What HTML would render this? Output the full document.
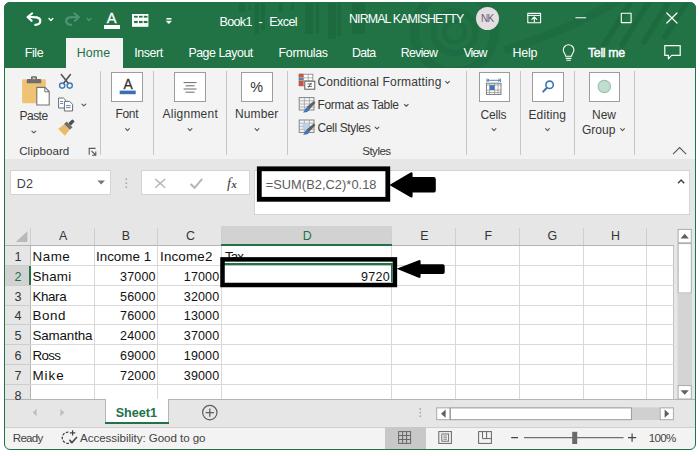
<!DOCTYPE html>
<html>
<head>
<meta charset="utf-8">
<title>Book1 - Excel</title>
<style>
html,body{margin:0;padding:0;}
body{width:700px;height:456px;background:#fff;overflow:hidden;position:relative;font-family:"Liberation Sans",sans-serif;}
.a{position:absolute;}
.t{position:absolute;white-space:nowrap;line-height:1;}
#win{position:absolute;left:4px;top:2px;width:692px;height:448px;border-radius:6px;background:#e6e6e6;overflow:hidden;}
#in{position:absolute;left:-4px;top:-2px;width:700px;height:456px;}
#frame{position:absolute;left:4px;top:2px;width:692px;height:448px;border-radius:6px;box-sizing:border-box;border:1px solid #217346;pointer-events:none;}
svg{position:absolute;overflow:visible;}
.ibox{position:absolute;background:#fff;border:1px solid #9c9c9c;box-sizing:border-box;}
.sep{position:absolute;width:1px;background:#c6c6c6;top:71px;height:84px;}
.wb{position:absolute;background:#fff;border:1px solid #d4d4d4;box-sizing:border-box;}
.vl{position:absolute;width:1px;background:#d9d9d9;}
.hl{position:absolute;height:1px;background:#d9d9d9;}
</style>
</head>
<body>
<div id="win"><div id="in">

<div class="a" style="left:0;top:0;width:700px;height:68px;background:#217346;"></div>
<svg style="left:0;top:0" width="700" height="68" viewBox="0 0 700 68">
 <defs><clipPath id="tc"><rect x="0" y="0" width="700" height="68"/></clipPath></defs>
 <g clip-path="url(#tc)" fill="none" stroke="#1d6a3f">
  <g stroke="none" fill="#1d6a3f"><rect x="239" y="2" width="6.0" height="10"/><rect x="248.6" y="2" width="2.0" height="8"/><rect x="254.6" y="2" width="4.4" height="32"/><rect x="260.6" y="2" width="4.4" height="28"/><rect x="279" y="2" width="4.0" height="10"/><rect x="291" y="2" width="3.0" height="8"/><rect x="305" y="2" width="8.0" height="32"/><rect x="316" y="2" width="3.0" height="31"/><rect x="328" y="2" width="8.0" height="37"/><rect x="337.5" y="2" width="3.5" height="34"/><rect x="352" y="2" width="13.0" height="32"/></g>
  <g stroke="#1e6c41"><circle cx="454.5" cy="32" r="10.5" stroke-width="4"/>
  <circle cx="454.5" cy="32" r="21" stroke-width="6"/>
  <circle cx="454.5" cy="32" r="40" stroke-width="9"/>
  </g>
  <g stroke-width="5.5" stroke-linecap="round">
   <line x1="632" y1="0" x2="604" y2="45"/><line x1="650" y1="0" x2="622" y2="45"/><line x1="670" y1="0" x2="644" y2="42"/><line x1="688" y1="0" x2="665" y2="37"/>
  </g>
  <path d="M505 50 Q570 30 618 0" stroke="#1e6c41" stroke-width="8" fill="none"/>


 </g>
</svg>
<!-- Home tab -->
<div class="a" style="left:65.5px;top:38px;width:57px;height:31px;background:#f3f3f3;"></div>
<!-- QAT icons -->
<svg style="left:0;top:0" width="700" height="68" viewBox="0 0 700 68" fill="none" stroke="#fff" stroke-linecap="round" stroke-linejoin="round">
 <!-- undo -->
 <path d="M32 13.5 L27.6 17 L31.6 20.8 M28.2 17 C33 17 40.3 16.4 40.3 20.8 C40.3 23.6 38 24.8 35.2 24.8" stroke-width="2.2"/>
 <path d="M49 18.6 L50.9 20.5 L52.8 18.6" stroke-width="1.4"/>
 <!-- redo (dim) -->
 <g stroke="#4f9470">
 <path d="M74.5 13.5 L78.9 17 L74.9 20.8 M78.3 17 C73.5 17 66.2 16.4 66.2 20.8 C66.2 23.6 68.5 24.8 71.3 24.8" stroke-width="2.2"/>
 <path d="M87.2 18.6 L89.1 20.5 L91 18.6" stroke-width="1.4"/>
 </g>
 <!-- customize -->
 <path d="M166.4 18.7 H171.4" stroke-width="1.4" stroke-linecap="butt"/>
 <path d="M166.3 20.9 H171.5 L168.9 23.8 Z" fill="#fff" stroke-width="0.4"/>
 <!-- ribbon display options -->
 <rect x="527.8" y="13.4" width="12.8" height="9.4" stroke-width="1.1"/>
 <path d="M527.8 15.4 H540.6" stroke-width="1"/>
 <path d="M534.3 22 V17 M531.9 19.3 L534.3 16.9 L536.7 19.3" stroke-width="1.1"/>
 <!-- minimize -->
 <path d="M575.8 17.7 H585.8" stroke-width="1.1"/>
 <!-- maximize -->
 <rect x="621.3" y="13.2" width="9.8" height="9.4" stroke-width="1.1"/>
 <!-- close -->
 <path d="M666.8 13 L677 23 M677 13 L666.8 23" stroke-width="1.2"/>
 <!-- bulb -->
 <path d="M565.6 56.2 C565.6 53.5 563.3 53 563.3 50 A5.3 5.3 0 0 1 573.9 50 C573.9 53 571.6 53.5 571.6 56.2 Z M566.2 58.4 H571 M566.8 60.3 H570.4" stroke-width="1.1"/>
 <!-- comment -->
 <path d="M664.8 45.6 H680.2 V55.4 H671.6 L668.4 58.8 V55.4 H664.8 Z" stroke-width="1.2"/>
</svg>
<!-- font colour A -->
<div class="a" style="left:103.5px;top:24.5px;width:16.4px;height:4px;background:#fff;"></div>
<!-- table icon -->
<svg style="left:132px;top:13.8px" width="16.4" height="12.8" viewBox="0 0 16.4 12.8">
 <rect x="0" y="0" width="16.4" height="12.8" fill="#fff"/>
 <g fill="#217346"><rect x="2.1" y="1.8" width="3.6" height="1.8"/><rect x="7" y="1.8" width="3.6" height="1.8"/><rect x="11.8" y="1.8" width="3.7" height="1.8"/>
 <rect x="2.1" y="6.9" width="3.6" height="2.2"/><rect x="7" y="6.9" width="3.6" height="2.2"/><rect x="11.8" y="6.9" width="3.7" height="2.2"/></g>
</svg>
<!-- NK avatar -->
<div class="a" style="left:476.3px;top:6.6px;width:23px;height:23px;border-radius:50%;background:#e3dfe0;"></div>


<div class="a" style="left:0;top:68px;width:700px;height:91px;background:#f3f3f3;"></div>
<div class="sep" style="left:100.0px"></div><div class="sep" style="left:153.3px"></div><div class="sep" style="left:225.8px"></div><div class="sep" style="left:286.8px"></div><div class="sep" style="left:466.3px"></div><div class="sep" style="left:519.9px"></div><div class="sep" style="left:573.5px"></div><div class="sep" style="left:634.1px"></div><div class="ibox" style="left:111.2px;top:72px;width:31.999999999999986px;height:30px;"></div><div class="ibox" style="left:174.2px;top:72px;width:31.400000000000006px;height:30px;"></div><div class="ibox" style="left:241.2px;top:72px;width:31.400000000000034px;height:30px;"></div><div class="ibox" style="left:478.6px;top:72px;width:31.19999999999999px;height:30px;"></div><div class="ibox" style="left:532px;top:72px;width:31.600000000000023px;height:30px;"></div><div class="ibox" style="left:588.6px;top:72px;width:31.399999999999977px;height:30px;"></div><svg style="left:0;top:0" width="700" height="170" viewBox="0 0 700 170"><path d="M31.9 131.05 L33.8 132.95 L35.699999999999996 131.05" fill="none" stroke="#555" stroke-width="1.1" stroke-linecap="round" stroke-linejoin="round"/><path d="M81.89999999999999 104.05 L83.8 105.95 L85.7 104.05" fill="none" stroke="#555" stroke-width="1.1" stroke-linecap="round" stroke-linejoin="round"/><path d="M125.6 128.65 L127.5 130.54999999999998 L129.4 128.65" fill="none" stroke="#555" stroke-width="1.1" stroke-linecap="round" stroke-linejoin="round"/><path d="M188.1 128.65 L190 130.54999999999998 L191.9 128.65" fill="none" stroke="#555" stroke-width="1.1" stroke-linecap="round" stroke-linejoin="round"/><path d="M255.1 128.65 L257 130.54999999999998 L258.9 128.65" fill="none" stroke="#555" stroke-width="1.1" stroke-linecap="round" stroke-linejoin="round"/><path d="M445.6 81.45 L447.5 83.35000000000001 L449.4 81.45" fill="none" stroke="#555" stroke-width="1.1" stroke-linecap="round" stroke-linejoin="round"/><path d="M404.40000000000003 104.35 L406.3 106.25 L408.2 104.35" fill="none" stroke="#555" stroke-width="1.1" stroke-linecap="round" stroke-linejoin="round"/><path d="M375.1 127.05 L377 128.95 L378.9 127.05" fill="none" stroke="#555" stroke-width="1.1" stroke-linecap="round" stroke-linejoin="round"/><path d="M492.1 128.65 L494 130.54999999999998 L495.9 128.65" fill="none" stroke="#555" stroke-width="1.1" stroke-linecap="round" stroke-linejoin="round"/><path d="M545.6 128.65 L547.5 130.54999999999998 L549.4 128.65" fill="none" stroke="#555" stroke-width="1.1" stroke-linecap="round" stroke-linejoin="round"/><path d="M620.6 128.65 L622.5 130.54999999999998 L624.4 128.65" fill="none" stroke="#555" stroke-width="1.1" stroke-linecap="round" stroke-linejoin="round"/>
 <rect x="22.1" y="79.2" width="23.7" height="24" rx="1.2" fill="#f0c374"/>
 <path d="M26.8 83.2 V80.2 Q26.8 79 28 79 H31 V77.4 Q31 76.2 32.2 76.2 H35.8 Q37 76.2 37 77.4 V79 H40 Q41.2 79 41.2 80.2 V83.2 Z" fill="#6e6e6e"/>
 <rect x="32.6" y="77.6" width="2.8" height="1.6" fill="#e9c78a"/>
 <path d="M36.8 87.4 H45 L49.2 91.6 V105 H36.8 Z" fill="#fff" stroke="#737373" stroke-width="1.1"/>
 <path d="M44.8 87.6 V91.8 H49" fill="none" stroke="#737373" stroke-width="1"/>

 <g fill="none" stroke-linecap="round">
 <path d="M61.3 74.6 L68.4 83.6 M70.4 74.6 L63.4 83.6" stroke="#555" stroke-width="1.6"/>
 <circle cx="62.2" cy="85.6" r="2.6" stroke="#3f7ab8" stroke-width="1.4"/>
 <circle cx="69.7" cy="85.6" r="2.6" stroke="#3f7ab8" stroke-width="1.4"/>
 </g>

 <g fill="#fff" stroke="#6b6b6b" stroke-width="1">
 <path d="M58.6 98 H63.4 L66 100.6 V108 H58.6 Z"/>
 <path d="M64.4 101.4 H69.6 L72.6 104.4 V111 H64.4 Z"/>
 </g>
 <path d="M60.2 101.5 H63 M60.2 103.5 H63 M66 105.6 H70.6 M66 107.6 H70.6" stroke="#4a7ab5" stroke-width="0.9"/>

 <g transform="translate(68.2,125.7) rotate(-45)">
  <path d="M-9.4 -4.8 L-1.8 -3.9 V3.9 L-9.4 4.8 Z" fill="#ecbb6a"/>
  <rect x="-1.8" y="-4.1" width="3.8" height="8.2" fill="#6e6e6e"/>
  <rect x="2" y="-1.7" width="5.6" height="3.4" rx="0.8" fill="#505050"/>
 </g>

 <path d="M89.2 154.8 V148.4 H95.6" fill="none" stroke="#5a5a5a" stroke-width="1.1"/>
 <path d="M91.4 150.8 L95.6 155 M95.8 151.4 V155.2 H92" fill="none" stroke="#5a5a5a" stroke-width="1.1"/>

 <rect x="119.7" y="90.6" width="16" height="3.6" fill="#3c6fb0"/>

 <path d="M183.6 82.6 H196.6 M185.6 85.8 H194.6 M183.6 89 H196.6 M185.6 92.2 H194.6" stroke="#6a6a6a" stroke-width="1"/>

 <rect x="299.2" y="74.2" width="13.6" height="11.6" fill="#fff" stroke="#8a8a8a" stroke-width="0.9"/>
 <path d="M303.6 74.2 V85.8 M308.2 74.2 V85.8 M299.2 77.8 H312.8 M299.2 80.6 H312.8" stroke="#9a9a9a" stroke-width="0.7" fill="none"/>
 <rect x="298.8" y="73.8" width="4.6" height="3.6" fill="#c8553d"/>
 <rect x="298.8" y="78" width="4.6" height="2.2" fill="#4f81bd"/>
 <rect x="298.8" y="80.8" width="4.6" height="5.2" fill="#c8553d"/>
 <rect x="304.8" y="81.2" width="10" height="8" fill="#fff" stroke="#5a5a5a" stroke-width="1"/>
 <path d="M307.6 84 H312 M307.6 86.4 H312 M311.2 82.8 L308.4 87.6" stroke="#444" stroke-width="0.8" fill="none"/>
<rect x="299.2" y="97.6" width="14.8" height="12.4" fill="#f1f4f8" stroke="#7a7a7a" stroke-width="0.9"/><path d="M299.6 100.8 H314.2 M299.6 104.0 H314.2 M299.6 107.0 H314.2 M304.4 97.6 V110.0 M309.4 97.6 V110.0" stroke="#9a9a9a" stroke-width="0.7"/><path d="M313.8 101.0 L315.4 102.8 L309.4 109.39999999999999 L306.6 107.0 Z" fill="#5f5f5f"/><path d="M307.2 107.19999999999999 L309.6 109.39999999999999 C308 112.8 304.4 112.19999999999999 303 112.39999999999999 C304.8 111.0 304.6 108.19999999999999 307.2 107.19999999999999 Z" fill="#3f76b5"/><rect x="299.2" y="120" width="14.8" height="12.4" fill="#f1f4f8" stroke="#7a7a7a" stroke-width="0.9"/><path d="M299.6 123.2 H314.2 M299.6 126.4 H314.2 M299.6 129.4 H314.2 M304.4 120 V132.4 M309.4 120 V132.4" stroke="#9a9a9a" stroke-width="0.7"/><rect x="302.4" y="123.4" width="7" height="6" fill="#bcd2ea"/><path d="M313.8 123.4 L315.4 125.2 L309.4 131.8 L306.6 129.4 Z" fill="#5f5f5f"/><path d="M307.2 129.6 L309.6 131.8 C308 135.2 304.4 134.6 303 134.8 C304.8 133.4 304.6 130.6 307.2 129.6 Z" fill="#3f76b5"/>
 <path d="M487 78.6 V82 M500.4 78.6 V82 M487.4 80.3 H500 M489 79 L487.6 80.3 L489 81.6 M498.4 79 L499.8 80.3 L498.4 81.6" stroke="#3f76b5" stroke-width="0.9" fill="none"/>
 <rect x="486.4" y="83.2" width="14.6" height="11.2" fill="#fff" stroke="#6f6f6f" stroke-width="0.9"/>
 <path d="M486.4 85 H501 M486.4 90 H501 M486.4 92.4 H501 M489.6 83.2 V94.4 M494.6 83.2 V94.4 M498 83.2 V94.4" stroke="#8a8a8a" stroke-width="0.7"/>
 <rect x="489.8" y="85.2" width="4.8" height="4.8" fill="#3f76b5"/>

 <circle cx="549.6" cy="84.8" r="3.7" fill="none" stroke="#3f76b5" stroke-width="1.6"/>
 <path d="M546.8 87.8 L543.2 91.6" stroke="#3f76b5" stroke-width="2" stroke-linecap="round"/>

 <circle cx="604.3" cy="86.5" r="6.2" fill="#c0ddd0" stroke="#9fc2af" stroke-width="1.2"/>
<path d="M673 154.2 L679.6 147.6 L686.2 154.2" fill="none" stroke="#555" stroke-width="1.1"/></svg>

<div class="wb" style="left:10.2px;top:170.4px;width:101px;height:25px;"></div>
<div class="wb" style="left:141.3px;top:170.4px;width:109.2px;height:25px;"></div>
<div class="wb" style="left:254.4px;top:170.4px;width:435.2px;height:45px;"></div>
<svg style="left:0;top:0" width="700" height="260" viewBox="0 0 700 260">
 <path d="M97.4 180.4 H105 L101.2 184.6 Z" fill="#777"/>
 <g fill="#a9a9a9"><rect x="125.5" y="178.4" width="1.6" height="1.6"/><rect x="125.5" y="182.4" width="1.6" height="1.6"/><rect x="125.5" y="186.4" width="1.6" height="1.6"/></g>
 <path d="M155.2 179 L165.2 187.8 M165.2 179 L155.2 187.8" stroke="#b5b5b5" stroke-width="1.5" fill="none"/>
 <path d="M190.6 184 L194.6 187.8 L202.2 178.8" stroke="#b5b5b5" stroke-width="2" fill="none"/>
 <path d="M678 183.2 L681.1 180 L684.2 183.2" stroke="#444" stroke-width="1.5" fill="none"/>
</svg>


<div class="a" style="left:30.3px;top:245.1px;width:643.5px;height:154.29999999999998px;background:#fff;"></div>
<div class="a" style="left:221.3px;top:226px;width:170.3px;height:19.099999999999994px;background:#d2d2d2;"></div>
<div class="a" style="left:5px;top:266px;width:25.3px;height:19px;background:#d2d2d2;"></div>
<div class="a" style="left:29.8px;top:228px;width:1px;height:17.099999999999994px;background:#cfcfcf;"></div><div class="a" style="left:93.7px;top:228px;width:1px;height:17.099999999999994px;background:#cfcfcf;"></div><div class="a" style="left:157.3px;top:228px;width:1px;height:17.099999999999994px;background:#cfcfcf;"></div><div class="a" style="left:220.8px;top:228px;width:1px;height:17.099999999999994px;background:#cfcfcf;"></div><div class="a" style="left:391.1px;top:228px;width:1px;height:17.099999999999994px;background:#cfcfcf;"></div><div class="a" style="left:455.0px;top:228px;width:1px;height:17.099999999999994px;background:#cfcfcf;"></div><div class="a" style="left:519.0px;top:228px;width:1px;height:17.099999999999994px;background:#cfcfcf;"></div><div class="a" style="left:582.7px;top:228px;width:1px;height:17.099999999999994px;background:#cfcfcf;"></div><div class="a" style="left:646.1px;top:228px;width:1px;height:17.099999999999994px;background:#cfcfcf;"></div><div class="vl" style="left:93.7px;top:245.1px;height:154.29999999999998px;"></div><div class="vl" style="left:157.3px;top:245.1px;height:154.29999999999998px;"></div><div class="vl" style="left:220.8px;top:245.1px;height:154.29999999999998px;"></div><div class="vl" style="left:391.1px;top:245.1px;height:154.29999999999998px;"></div><div class="vl" style="left:455.0px;top:245.1px;height:154.29999999999998px;"></div><div class="vl" style="left:519.0px;top:245.1px;height:154.29999999999998px;"></div><div class="vl" style="left:582.7px;top:245.1px;height:154.29999999999998px;"></div><div class="vl" style="left:646.1px;top:245.1px;height:154.29999999999998px;"></div><div class="a" style="left:29.8px;top:245.1px;width:1px;height:154.29999999999998px;background:#b4b4b4;"></div><div class="a" style="left:673.3px;top:245.1px;width:1px;height:154.29999999999998px;background:#c4c4c4;"></div><div class="hl" style="left:30.3px;top:265px;width:643.5px;"></div><div class="a" style="left:5px;top:265px;width:25.3px;height:1px;background:#cdcdcd;"></div><div class="hl" style="left:30.3px;top:285px;width:643.5px;"></div><div class="a" style="left:5px;top:285px;width:25.3px;height:1px;background:#cdcdcd;"></div><div class="hl" style="left:30.3px;top:305px;width:643.5px;"></div><div class="a" style="left:5px;top:305px;width:25.3px;height:1px;background:#cdcdcd;"></div><div class="hl" style="left:30.3px;top:324px;width:643.5px;"></div><div class="a" style="left:5px;top:324px;width:25.3px;height:1px;background:#cdcdcd;"></div><div class="hl" style="left:30.3px;top:344px;width:643.5px;"></div><div class="a" style="left:5px;top:344px;width:25.3px;height:1px;background:#cdcdcd;"></div><div class="hl" style="left:30.3px;top:364px;width:643.5px;"></div><div class="a" style="left:5px;top:364px;width:25.3px;height:1px;background:#cdcdcd;"></div><div class="hl" style="left:30.3px;top:384px;width:643.5px;"></div><div class="a" style="left:5px;top:384px;width:25.3px;height:1px;background:#cdcdcd;"></div><div class="a" style="left:5px;top:245px;width:668.8px;height:1px;background:#b4b4b4;"></div><div class="a" style="left:221.3px;top:244.1px;width:170.3px;height:1.5px;background:#217346;"></div><div class="a" style="left:28.900000000000002px;top:266px;width:1.8px;height:19px;background:#217346;"></div><svg style="left:0;top:0" width="700" height="456" viewBox="0 0 700 456"><path d="M27.4 231.2 V242 H15.8 Z" fill="#b9b9b9"/>
 <rect x="677.6" y="226" width="14" height="173.4" fill="#e6e6e6"/>
 <rect x="678.1" y="229.4" width="13.2" height="13.4" fill="#fff" stroke="#ababab" stroke-width="1"/>
 <path d="M680.6 238.4 H688.8 L684.7 233.8 Z" fill="#606060"/>
 <rect x="678.1" y="243.6" width="13.2" height="49.4" fill="#fff" stroke="#ababab" stroke-width="1"/>
 <rect x="677.6" y="293.5" width="14.2" height="92" fill="#d4d4d4"/>
 <rect x="678.1" y="385.6" width="13.2" height="13.4" fill="#fff" stroke="#ababab" stroke-width="1"/>
 <path d="M680.6 390.2 H688.8 L684.7 394.8 Z" fill="#606060"/>
</svg>


<div class="a" style="left:0;top:399.4px;width:700px;height:28px;background:#e6e6e6;"></div>
<div class="a" style="left:5px;top:398.9px;width:690px;height:1px;background:#b4b4b4;"></div>
<div class="a" style="left:104.6px;top:398.9px;width:64.6px;height:23.6px;background:#fff;border-left:1px solid #b4b4b4;border-right:1px solid #b4b4b4;box-sizing:border-box;"></div>
<div class="a" style="left:104.6px;top:422.4px;width:64.6px;height:2px;background:#217346;"></div>
<svg style="left:0;top:0" width="700" height="456" viewBox="0 0 700 456">
 <path d="M36.6 409 V416.2 L32.6 412.6 Z" fill="#bdbdbd"/>
 <path d="M60.4 409 V416.2 L64.4 412.6 Z" fill="#bdbdbd"/>
 <circle cx="209.8" cy="412.6" r="7.2" fill="none" stroke="#5e5e5e" stroke-width="1.2"/>
 <path d="M205.6 412.6 H214 M209.8 408.4 V416.8" stroke="#5e5e5e" stroke-width="1.3"/>
 <g fill="#a9a9a9"><rect x="419.5" y="408.2" width="1.6" height="1.6"/><rect x="419.5" y="411.8" width="1.6" height="1.6"/><rect x="419.5" y="415.4" width="1.6" height="1.6"/></g>
 <rect x="436.2" y="407.4" width="237.4" height="12.6" fill="#d0d0d0"/>
 <rect x="436.7" y="407.9" width="13.2" height="11.8" fill="#fff" stroke="#ababab" stroke-width="1"/>
 <path d="M445.6 409.6 V417.8 L441 413.7 Z" fill="#606060"/>
 <rect x="450.4" y="407.9" width="181" height="11.8" fill="#fff" stroke="#9a9a9a" stroke-width="1"/>
 <rect x="660.2" y="407.9" width="13.2" height="11.8" fill="#fff" stroke="#ababab" stroke-width="1"/>
 <path d="M664.6 409.6 V417.8 L669.2 413.7 Z" fill="#606060"/>
</svg>


<div class="a" style="left:0;top:427px;width:700px;height:24px;background:#f3f3f3;"></div>
<div class="a" style="left:5px;top:426.5px;width:690px;height:1px;background:#cfcfcf;"></div>
<div class="a" style="left:384.6px;top:427.4px;width:41.2px;height:22.6px;background:#c8c8c8;"></div>
<svg style="left:0;top:0" width="700" height="456" viewBox="0 0 700 456" fill="none">
 <!-- accessibility icon -->
 <path d="M68.4 432.2 A5.6 5.6 0 1 0 71 442.4" stroke="#444" stroke-width="1.3" stroke-dasharray="2.6 1.5"/>
 <path d="M72.6 430.2 V435.6 M69.9 432.9 H75.3" stroke="#444" stroke-width="1.2"/>
 <path d="M69.4 439.8 L72 442.6 L77 437" stroke="#444" stroke-width="1.5"/>
 <!-- normal view -->
 <rect x="398.6" y="431.6" width="12" height="11.8" stroke="#666" stroke-width="1"/>
 <path d="M398.6 435.5 H410.6 M398.6 439.5 H410.6 M402.6 431.6 V443.4 M406.6 431.6 V443.4" stroke="#666" stroke-width="1"/>
 <!-- page layout -->
 <rect x="438.8" y="431.6" width="12.6" height="11.8" stroke="#666" stroke-width="1"/>
 <rect x="441.8" y="434" width="6.8" height="7.2" stroke="#666" stroke-width="0.9"/>
 <path d="M443.4 436 H447 M443.4 437.7 H447 M443.4 439.4 H447" stroke="#666" stroke-width="0.7"/>
 <!-- page break -->
 <rect x="478.6" y="431.6" width="12.8" height="11.8" stroke="#666" stroke-width="1"/>
 <path d="M482.5 431.6 V438.6 H491.4 M486.6 431.6 V438.6" stroke="#666" stroke-width="1"/>
 <!-- zoom -->
 <path d="M511.2 437.7 H518" stroke="#444" stroke-width="1.2"/>
 <path d="M524 437.7 H623.6" stroke="#505050" stroke-width="1"/>
 <rect x="572.2" y="431.8" width="5" height="12.2" fill="#6a6a6a"/>
 <path d="M628 437.7 H636.2 M632.1 433.6 V441.8" stroke="#444" stroke-width="1.2"/>
</svg>

<div class="t" style="left:106.80px;top:11px;font-size:14.6px;color:#fff;-webkit-text-stroke:0.35px #fff;">A</div>
<div class="t" style="left:219.50px;top:16px;font-size:12.6px;color:#fff;letter-spacing:-0.700px;">Book1</div>
<div class="t" style="left:258.60px;top:16px;font-size:12.6px;color:#fff;">-</div>
<div class="t" style="left:269.20px;top:16px;font-size:12.6px;color:#fff;letter-spacing:-0.600px;">Excel</div>
<div class="t" style="left:349.00px;top:13px;font-size:12.4px;color:#fff;letter-spacing:-0.863px;">NIRMAL KAMISHETTY</div>
<div class="t" style="left:481.00px;top:14px;font-size:10px;color:#6a5a78;letter-spacing:-0.800px;">NK</div>
<div class="t" style="left:24.80px;top:47px;font-size:12.4px;color:#fff;letter-spacing:-0.400px;">File</div>
<div class="t" style="left:76.80px;top:47px;font-size:12.4px;color:#217346;letter-spacing:0.067px;">Home</div>
<div class="t" style="left:134.20px;top:47px;font-size:12.4px;color:#fff;letter-spacing:-0.400px;">Insert</div>
<div class="t" style="left:188.40px;top:47px;font-size:12.4px;color:#fff;letter-spacing:-0.470px;">Page Layout</div>
<div class="t" style="left:278.60px;top:47px;font-size:12.4px;color:#fff;letter-spacing:-0.314px;">Formulas</div>
<div class="t" style="left:352.00px;top:47px;font-size:12.4px;color:#fff;letter-spacing:-0.667px;">Data</div>
<div class="t" style="left:400.80px;top:47px;font-size:12.4px;color:#fff;letter-spacing:-0.720px;">Review</div>
<div class="t" style="left:463.40px;top:47px;font-size:12.4px;color:#fff;letter-spacing:-0.867px;">View</div>
<div class="t" style="left:512.50px;top:47px;font-size:12.4px;color:#fff;letter-spacing:-0.167px;">Help</div>
<div class="t" style="left:588.00px;top:47px;font-size:12.4px;color:#fff;letter-spacing:-0.333px;-webkit-text-stroke:0.4px #fff;">Tell me</div>
<div class="t" style="left:123.40px;top:78px;font-size:13.8px;color:#333;-webkit-text-stroke:0.3px #333;">A</div>
<div class="t" style="left:250.30px;top:80px;font-size:14.4px;color:#333;">%</div>
<div class="t" style="left:19.60px;top:110px;font-size:12px;color:#383838;letter-spacing:-0.550px;">Paste</div>
<div class="t" style="left:19.20px;top:145px;font-size:11.6px;color:#383838;letter-spacing:0.062px;">Clipboard</div>
<div class="t" style="left:115.40px;top:108px;font-size:12px;color:#383838;letter-spacing:-0.267px;">Font</div>
<div class="t" style="left:162.60px;top:108px;font-size:12px;color:#383838;letter-spacing:0.225px;">Alignment</div>
<div class="t" style="left:234.90px;top:108px;font-size:12px;color:#383838;letter-spacing:0.140px;">Number</div>
<div class="t" style="left:317.40px;top:76px;font-size:12px;color:#383838;letter-spacing:0.152px;">Conditional Formatting</div>
<div class="t" style="left:317.40px;top:99px;font-size:12px;color:#383838;letter-spacing:-0.300px;">Format as Table</div>
<div class="t" style="left:317.40px;top:122px;font-size:12px;color:#383838;letter-spacing:-0.340px;">Cell Styles</div>
<div class="t" style="left:362.20px;top:145px;font-size:11.6px;color:#383838;letter-spacing:-0.520px;">Styles</div>
<div class="t" style="left:480.60px;top:109px;font-size:12px;color:#383838;letter-spacing:-0.200px;">Cells</div>
<div class="t" style="left:528.50px;top:109px;font-size:12px;color:#383838;letter-spacing:0.117px;">Editing</div>
<div class="t" style="left:592.00px;top:109px;font-size:12px;color:#383838;">New</div>
<div class="t" style="left:582.00px;top:124px;font-size:12px;color:#383838;">Group</div>
<div class="t" style="left:16.70px;top:178px;font-size:12.6px;color:#444;letter-spacing:0.300px;">D2</div>
<div class="t" style="left:227.00px;top:176px;font-size:14.5px;color:#444;font-family:'Liberation Serif',serif;font-style:italic;">f</div>
<div class="t" style="left:231.60px;top:180px;font-size:10.5px;color:#444;font-weight:bold;font-family:'Liberation Serif',serif;font-style:italic;">x</div>
<div class="t" style="left:265.70px;top:179px;font-size:12.8px;color:#5c5c5c;letter-spacing:0.060px;">=SUM(B2,C2)*0.18</div>
<div class="t" style="left:58.90px;top:230px;font-size:12.4px;color:#333;width:8px;text-align:center;">A</div>
<div class="t" style="left:121.80px;top:230px;font-size:12.4px;color:#333;width:8px;text-align:center;">B</div>
<div class="t" style="left:186.00px;top:230px;font-size:12.4px;color:#333;width:8px;text-align:center;">C</div>
<div class="t" style="left:302.80px;top:230px;font-size:12.4px;color:#217346;width:8px;text-align:center;">D</div>
<div class="t" style="left:420.20px;top:230px;font-size:12.4px;color:#333;width:8px;text-align:center;">E</div>
<div class="t" style="left:484.20px;top:230px;font-size:12.4px;color:#333;width:8px;text-align:center;">F</div>
<div class="t" style="left:547.60px;top:230px;font-size:12.4px;color:#333;width:8px;text-align:center;">G</div>
<div class="t" style="left:610.90px;top:230px;font-size:12.4px;color:#333;width:8px;text-align:center;">H</div>
<div class="t" style="left:14.40px;top:251px;font-size:12.6px;color:#333;width:6px;text-align:center;">1</div>
<div class="t" style="left:14.40px;top:271px;font-size:12.6px;color:#217346;width:6px;text-align:center;">2</div>
<div class="t" style="left:14.40px;top:291px;font-size:12.6px;color:#333;width:6px;text-align:center;">3</div>
<div class="t" style="left:14.40px;top:310px;font-size:12.6px;color:#333;width:6px;text-align:center;">4</div>
<div class="t" style="left:14.40px;top:330px;font-size:12.6px;color:#333;width:6px;text-align:center;">5</div>
<div class="t" style="left:14.40px;top:350px;font-size:12.6px;color:#333;width:6px;text-align:center;">6</div>
<div class="t" style="left:14.40px;top:370px;font-size:12.6px;color:#333;width:6px;text-align:center;">7</div>
<div class="t" style="left:14.40px;top:390px;font-size:12.6px;color:#333;width:6px;text-align:center;">8</div>
<div class="t" style="left:32.40px;top:250px;font-size:13.4px;color:#111;letter-spacing:0.567px;">Name</div>
<div class="t" style="left:96.00px;top:250px;font-size:13.4px;color:#111;">Income 1</div>
<div class="t" style="left:160.00px;top:250px;font-size:13.4px;color:#111;letter-spacing:0.167px;">Income2</div>
<div class="t" style="left:32.40px;top:270px;font-size:13.4px;color:#111;letter-spacing:0.200px;">Shami</div>
<div class="t" style="left:120.00px;top:271px;font-size:12.5px;color:#111;letter-spacing:0.200px;">37000</div>
<div class="t" style="left:183.80px;top:271px;font-size:12.5px;color:#111;letter-spacing:0.150px;">17000</div>
<div class="t" style="left:32.40px;top:290px;font-size:13.4px;color:#111;letter-spacing:-0.375px;">Khara</div>
<div class="t" style="left:120.00px;top:291px;font-size:12.5px;color:#111;letter-spacing:0.200px;">56000</div>
<div class="t" style="left:183.80px;top:291px;font-size:12.5px;color:#111;letter-spacing:0.150px;">32000</div>
<div class="t" style="left:32.40px;top:309px;font-size:13.4px;color:#111;letter-spacing:0.567px;">Bond</div>
<div class="t" style="left:120.00px;top:310px;font-size:12.5px;color:#111;letter-spacing:0.200px;">76000</div>
<div class="t" style="left:183.80px;top:310px;font-size:12.5px;color:#111;letter-spacing:0.150px;">13000</div>
<div class="t" style="left:32.40px;top:329px;font-size:13.4px;color:#111;letter-spacing:-0.129px;">Samantha</div>
<div class="t" style="left:120.00px;top:330px;font-size:12.5px;color:#111;letter-spacing:0.200px;">24000</div>
<div class="t" style="left:183.80px;top:330px;font-size:12.5px;color:#111;letter-spacing:0.150px;">37000</div>
<div class="t" style="left:32.40px;top:349px;font-size:13.4px;color:#111;letter-spacing:-0.667px;">Ross</div>
<div class="t" style="left:120.00px;top:350px;font-size:12.5px;color:#111;letter-spacing:0.200px;">69000</div>
<div class="t" style="left:183.80px;top:350px;font-size:12.5px;color:#111;letter-spacing:0.150px;">19000</div>
<div class="t" style="left:32.40px;top:369px;font-size:13.4px;color:#111;letter-spacing:1.000px;">Mike</div>
<div class="t" style="left:120.00px;top:370px;font-size:12.5px;color:#111;letter-spacing:0.200px;">72000</div>
<div class="t" style="left:183.80px;top:370px;font-size:12.5px;color:#111;letter-spacing:0.150px;">39000</div>
<div class="t" style="left:225.00px;top:250px;font-size:13.4px;color:#111;letter-spacing:-1.000px;">Tax</div>
<div class="t" style="left:361.00px;top:271px;font-size:12.5px;color:#111;letter-spacing:0.333px;">9720</div>
<div class="t" style="left:115.70px;top:407px;font-size:12.6px;color:#217346;font-weight:bold;letter-spacing:-0.020px;">Sheet1</div>
<div class="t" style="left:12.80px;top:432px;font-size:11.6px;color:#444;letter-spacing:-0.750px;">Ready</div>
<div class="t" style="left:80.00px;top:432px;font-size:11.6px;color:#444;letter-spacing:-0.058px;">Accessibility: Good to go</div>
<div class="t" style="left:648.80px;top:432px;font-size:11.6px;color:#444;letter-spacing:-0.700px;">100%</div>

<svg style="left:0;top:0" width="700" height="456" viewBox="0 0 700 456">
 <!-- D2 selection (green) partly visible inside the black box -->
 <rect x="224" y="263" width="168.4" height="2.2" fill="#217346"/>
 <rect x="391" y="263" width="1.5" height="19" fill="#217346"/>
 <rect x="259.3" y="168.8" width="128.5" height="30.5" fill="none" stroke="#000" stroke-width="4.8"/>
 <path d="M389.4 185 L410.6 172.6 Q412.6 171.6 412.6 173.8 V177.1 H433.6 Q435.8 177.1 435.8 179.3 V190.4 Q435.8 192.6 433.6 192.6 H412.6 V196 Q412.6 198.2 410.6 197.2 Z" fill="#000"/>
 <rect x="222.5" y="259.4" width="172.4" height="25.6" fill="none" stroke="#000" stroke-width="4.5"/>
 <path d="M396.6 268.7 L418.8 260.2 Q420.6 259.6 420.6 261.4 V264.2 H442.8 Q444.7 264.2 444.7 266 V272.3 Q444.7 274.1 442.8 274.1 H420.6 V276.6 Q420.6 278.4 418.8 277.8 Z" fill="#000"/>
</svg>

</div></div>
<div id="frame"></div>
</body>
</html>
